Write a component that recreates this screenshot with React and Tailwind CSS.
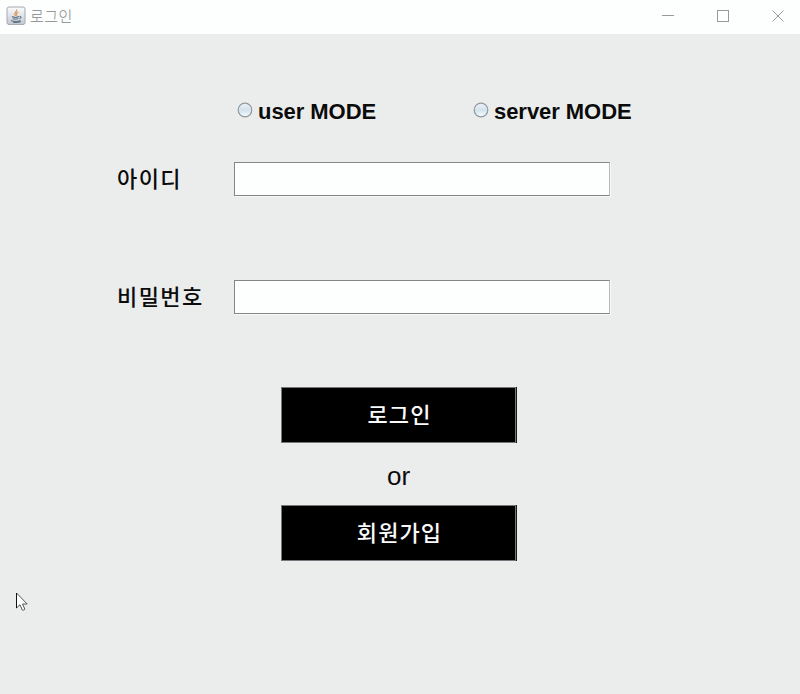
import React from "react";

function JavaIcon() {
  return (
    <svg width="20" height="20" viewBox="0 0 20 20" className="block shrink-0">
      <defs>
        <linearGradient id="tile" x1="0" y1="0" x2="0" y2="1">
          <stop offset="0" stopColor="#fbfcfc" />
          <stop offset="1" stopColor="#c3c9d1" />
        </linearGradient>
      </defs>
      <rect x="1" y="1" width="18" height="17.5" rx="2" fill="url(#tile)" stroke="#a3aab3" />
      <path d="M10.6 3.5c1 2-3 3.4-1.7 5.2.3.6.8.9 1 1.3M12.2 6.2c-1.8.9-2.4 1.9-1.3 3.4" fill="none" stroke="#dd9a62" strokeWidth="1.3" />
      <path d="M6 10.6c1.7.9 5.3.8 7 0M6.8 12.6c1.5.7 4 .6 5.5 0M5 14.5c2.5 1.1 7 1.1 9.4 0M7 16.2c3 .5 6 .3 8-.7M13.6 10.6c1.8-.2 1.8 1.5 0 2" fill="none" stroke="#5f7286" strokeWidth="1.1" />
    </svg>
  );
}

function TitleBar() {
  return (
    <header className="flex h-[34px] items-start justify-between bg-[#fdfefe] pl-1.5">
      <div className="flex h-8 items-center gap-1">
        <JavaIcon />
        <span className="pb-px text-[15px] leading-5 tracking-[0.4px] text-[#858585] font-['Noto_Sans_CJK_KR',sans-serif] font-light">로그인</span>
      </div>
      <svg width="140" height="32" className="block" fill="none" stroke="#999999" strokeWidth="1">
        <path d="M2 15.5h12" />
        <rect x="57.5" y="10.5" width="11" height="11" />
        <path d="M112.5 10.5l11 11m0-11l-11 11" />
      </svg>
    </header>
  );
}

function Radio({ label, className }) {
  return (
    <label className={`flex items-center ${className}`}>
      <svg width="16" height="16" viewBox="0 0 16 16" className="mb-0.5 mr-[5px] block shrink-0">
        <defs>
          <linearGradient id="dot" x1="0" y1="0" x2="0" y2="1">
            <stop offset="0" stopColor="#eef3f6" />
            <stop offset="0.5" stopColor="#d3e2ec" />
            <stop offset="1" stopColor="#f5fcff" />
          </linearGradient>
        </defs>
        <circle cx="8" cy="8" r="6.8" fill="url(#dot)" stroke="#8f979f" strokeWidth="1.2" />
      </svg>
      <span className="whitespace-nowrap pt-px text-[22px] font-bold leading-6 tracking-[-0.05px]">{label}</span>
    </label>
  );
}

function Field({ label, type }) {
  return (
    <label className="flex h-[34px] items-center">
      <span className="w-[117px] shrink-0 pb-1 text-[22px] font-medium leading-[30px] tracking-[1.4px] font-['Noto_Sans_CJK_KR',sans-serif]">{label}</span>
      <input type={type} className="h-[34px] w-[376px] border border-[#838688] border-r-[#b5b9bb] bg-[#fdfefe] px-1 outline-none shadow-[1px_1px_0_#f8f9f9]" />
    </label>
  );
}

function ActionButton({ children }) {
  return (
    <button className="flex h-14 w-[235px] items-center justify-center border border-[#77777d] bg-black pb-1 pl-0.5 text-[22px] font-medium leading-8 tracking-[1.1px] text-[#fafafa] shadow-[1px_0_0_#18181c] font-['Noto_Sans_CJK_KR',sans-serif]">
      {children}
    </button>
  );
}

export default function App() {
  return (
    <div className="relative h-[694px] w-[800px] overflow-hidden bg-[#ebeded] text-[#0b0b0b] font-['Liberation_Sans',sans-serif]">
      <TitleBar />
      <main className="pl-[117px] pt-[65px]">
        <div className="flex h-6 pl-[120px]">
          <Radio label="user MODE" className="w-[236px]" />
          <Radio label="server MODE" className="" />
        </div>
        <form className="mt-[39px] flex flex-col">
          <Field label="아이디" type="text" />
          <div className="mt-[84px]">
            <Field label="비밀번호" type="password" />
          </div>
        </form>
        <div className="ml-[164px] mt-[73px] flex w-[235px] flex-col items-center">
          <ActionButton>로그인</ActionButton>
          <div className="flex h-[62px] items-center pt-1 text-[26px] leading-7">or</div>
          <ActionButton>회원가입</ActionButton>
        </div>
      </main>
      <svg width="13" height="20" viewBox="0 0 13 20" className="absolute left-4 top-[592px]">
        <path d="M.5 1v15l3.500-3.300 2.300 5.300c1 .5 2.300 0 2.500-1l-2.300-5h4.700z" fill="#fff" stroke="#55555a" />
        <path d="M.5 1v15" stroke="#111" />
      </svg>
    </div>
  );
}
